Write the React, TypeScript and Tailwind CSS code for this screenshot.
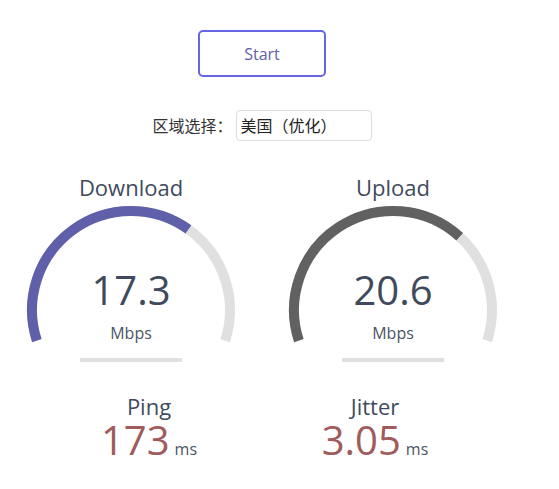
import React from "react";

const CX = 131;
const CY = 106;
const R = 99;

function pt(theta: number) {
  return [CX + R * Math.cos(theta), CY + R * Math.sin(theta)];
}

function arcPath(a0: number, a1: number) {
  const [x0, y0] = pt(a0);
  const [x1, y1] = pt(a1);
  const large = a1 - a0 > Math.PI ? 1 : 0;
  return `M ${x0.toFixed(2)} ${y0.toFixed(2)} A ${R} ${R} 0 ${large} 1 ${x1.toFixed(2)} ${y1.toFixed(2)}`;
}

function amount(s: number) {
  return 1 - 1 / Math.pow(1.3, Math.sqrt(s));
}

function Gauge({ title, value, color }: { title: string; value: number; color: string }) {
  const start = -Math.PI * 1.1;
  const end = Math.PI * 0.1;
  const prog = start + (end - start) * amount(value);
  return (
    <div className="w-[262px] flex flex-col items-center">
      <div className="text-[22px] leading-[30px] mb-[2px] text-[#3f4b5d]">{title}</div>
      <div className="relative w-[262px] h-[160px] flex flex-col items-center">
        <svg className="absolute left-0 top-0" width="262" height="160" viewBox="0 0 262 160">
          <path d={arcPath(start, end)} fill="none" stroke="#e0e0e0" strokeWidth="10" />
          <path d={arcPath(start, prog)} fill="none" stroke={color} strokeWidth="10" />
        </svg>
        <div className="relative mt-[64px] text-[40px] leading-[44px] text-[#3f4b5d]">{value.toFixed(1)}</div>
        <div className="relative mt-[11px] text-[16px] leading-[20px] text-[#4a5566]">Mbps</div>
        <div className="relative mt-[15px] w-[102px] h-[4px] bg-[#e0e0e0]" />
      </div>
    </div>
  );
}

function Stat({ title, value }: { title: string; value: string }) {
  return (
    <div className="w-[226px] flex flex-col items-center">
      <div className="text-[22px] leading-[28px] text-[#3f4b5d]">{title}</div>
      <div className="flex items-baseline">
        <span className="text-[40px] leading-[40px] text-[#a05c5c]">{value}</span>
        <span className="ml-[5px] text-[16px] leading-[20px] text-[#4a5566]">ms</span>
      </div>
    </div>
  );
}

export default function App() {
  return (
    <div className="w-[559px] h-[489px] bg-white" style={{ fontFamily: '"Open Sans", "Noto Sans CJK SC", sans-serif' }}>
      <div className="w-[524px] flex flex-col items-center">
        <div className="mt-[30px] w-[128px] h-[47px] border-2 border-[#6666e4] rounded-[5px] flex items-center justify-center text-[16px] text-[#6060AA]">
          Start
        </div>
        <div className="mt-[33px] flex items-center">
          <span className="text-[16px] text-[#333] mr-[3px]">区域选择：</span>
          <div className="w-[136px] h-[31px] border border-[#dddddd] rounded-[4px] flex items-center pl-[4px] text-[16px] text-[#222]">
            美国（优化）
          </div>
        </div>
        <div className="mt-[31px] flex">
          <Gauge title="Download" value={17.3} color="#6060AA" />
          <Gauge title="Upload" value={20.6} color="#616161" />
        </div>
        <div className="mt-[28px] flex">
          <Stat title="Ping" value="173" />
          <Stat title="Jitter" value="3.05" />
        </div>
      </div>
    </div>
  );
}
